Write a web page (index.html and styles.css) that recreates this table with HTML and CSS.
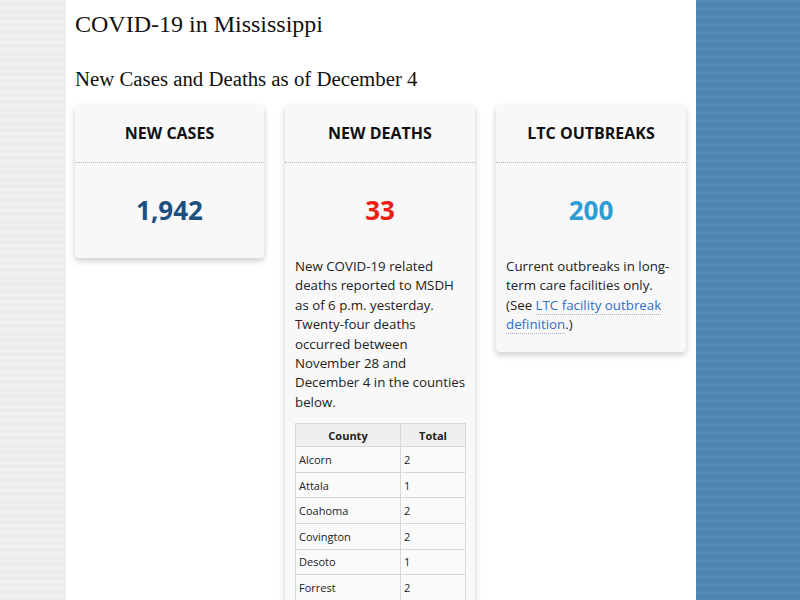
FILE: index.html
```
<!DOCTYPE html>
<html lang="en">
<head>
<meta charset="utf-8">
<title>COVID-19 in Mississippi</title>
<link rel="stylesheet" href="styles.css">
</head>
<body>
<div class="page">
  <div class="side-left"></div>
  <main class="main">
    <h1 class="title">COVID-19 in Mississippi</h1>
    <h2 class="subtitle">New Cases and Deaths as of December 4</h2>
    <div class="cards">
      <section class="card">
        <div class="card-head">NEW CASES</div>
        <div class="card-body">
          <div class="num num-cases">1,942</div>
        </div>
      </section>
      <section class="card">
        <div class="card-head">NEW DEATHS</div>
        <div class="card-body">
          <div class="num num-deaths">33</div>
          <p class="desc">New COVID-19 related deaths reported to MSDH as of 6 p.m. yesterday. Twenty-four deaths occurred between November 28 and December 4 in the counties below.</p>
          <table class="tbl">
            <thead>
              <tr><th class="c1">County</th><th class="c2">Total</th></tr>
            </thead>
            <tbody>
              <tr><td>Alcorn</td><td>2</td></tr>
              <tr><td>Attala</td><td>1</td></tr>
              <tr><td>Coahoma</td><td>2</td></tr>
              <tr><td>Covington</td><td>2</td></tr>
              <tr><td>Desoto</td><td>1</td></tr>
              <tr><td>Forrest</td><td>2</td></tr>
              <tr><td>Grenada</td><td>1</td></tr>
            </tbody>
          </table>
        </div>
      </section>
      <section class="card">
        <div class="card-head">LTC OUTBREAKS</div>
        <div class="card-body">
          <div class="num num-ltc">200</div>
          <p class="desc desc-last">Current outbreaks in long-term care facilities only. (See <a class="link" href="#">LTC facility outbreak definition</a>.)</p>
        </div>
      </section>
    </div>
  </main>
  <div class="side-right"></div>
</div>
</body>
</html>
```
FILE: styles.css
```
html, body {
  margin: 0;
  padding: 0;
  height: 100%;
  overflow: hidden;
}
body {
  font-family: "Open Sans", "Noto Sans", sans-serif;
  color: #222;
  background: #fff;
}
.page {
  display: flex;
  height: 600px;
}
.side-left {
  width: 66px;
  flex: none;
  background-color: #eeeeee;
  background-image: repeating-linear-gradient(180deg, rgba(255,255,255,0.25) 0px, rgba(255,255,255,0) 2px, rgba(0,0,0,0.012) 4px, rgba(0,0,0,0) 7px);
}
.side-right {
  flex: 1;
  background-color: #5087b4;
  background-image: repeating-linear-gradient(180deg, rgba(255,255,255,0.03) 0px, rgba(255,255,255,0) 3px, rgba(0,0,0,0.025) 5px, rgba(0,0,0,0) 8px);
}
.main {
  width: 612px;
  flex: none;
  padding: 0 9px;
  background: #fff;
}
.title {
  font-family: "Liberation Serif", "Times New Roman", serif;
  font-weight: normal;
  font-size: 24px;
  line-height: 30px;
  margin: 9px 0 0;
  color: #111;
}
.subtitle {
  font-family: "Liberation Serif", "Times New Roman", serif;
  font-weight: normal;
  font-size: 20.8px;
  line-height: 26px;
  margin: 27px 0 0;
  color: #111;
}
.cards {
  display: grid;
  grid-template-columns: 189px 190px 190px;
  column-gap: 21px;
  align-items: start;
  margin-top: 13px;
}
.card {
  background: #f8f8f8;
  border-radius: 4px;
  box-shadow: 0 3px 6px rgba(0,0,0,0.2);
}
.card-head {
  height: 57px;
  line-height: 57px;
  text-align: center;
  font-weight: 700;
  font-size: 16px;
  color: #111;
  border-bottom: 1px dotted #b5b5b5;
}
.card-body {
  padding: 0 10px;
}
.num {
  text-align: center;
  font-weight: 700;
  font-size: 26px;
  line-height: 34px;
  padding: 30px 0 31px;
}
.num-cases { color: #1d4f80; }
.num-deaths { color: #ec1f14; }
.num-ltc { color: #2b9cd4; }
.desc {
  margin: -1px -4px 0 0;
  font-size: 13.3px;
  line-height: 19.4px;
  color: #222;
}
.desc-last {
  margin-bottom: 17px;
}
.link {
  color: #2f6fc4;
  text-decoration: none;
  border-bottom: 1px dotted #a8b0b8;
}
.tbl {
  margin-top: 11px;
  width: 171px;
  border-collapse: collapse;
  font-size: 11px;
  color: #222;
}
.tbl th {
  background: #efefef;
  font-weight: 700;
  text-align: center;
  height: 22px;
  padding: 0 3px;
  border: 1px solid #d8d8d8;
}
.tbl td {
  height: 24.6px;
  padding: 0 3px;
  border: 1px solid #d8d8d8;
  background: #fafafa;
}
.tbl .c1 { width: 98px; }
```
